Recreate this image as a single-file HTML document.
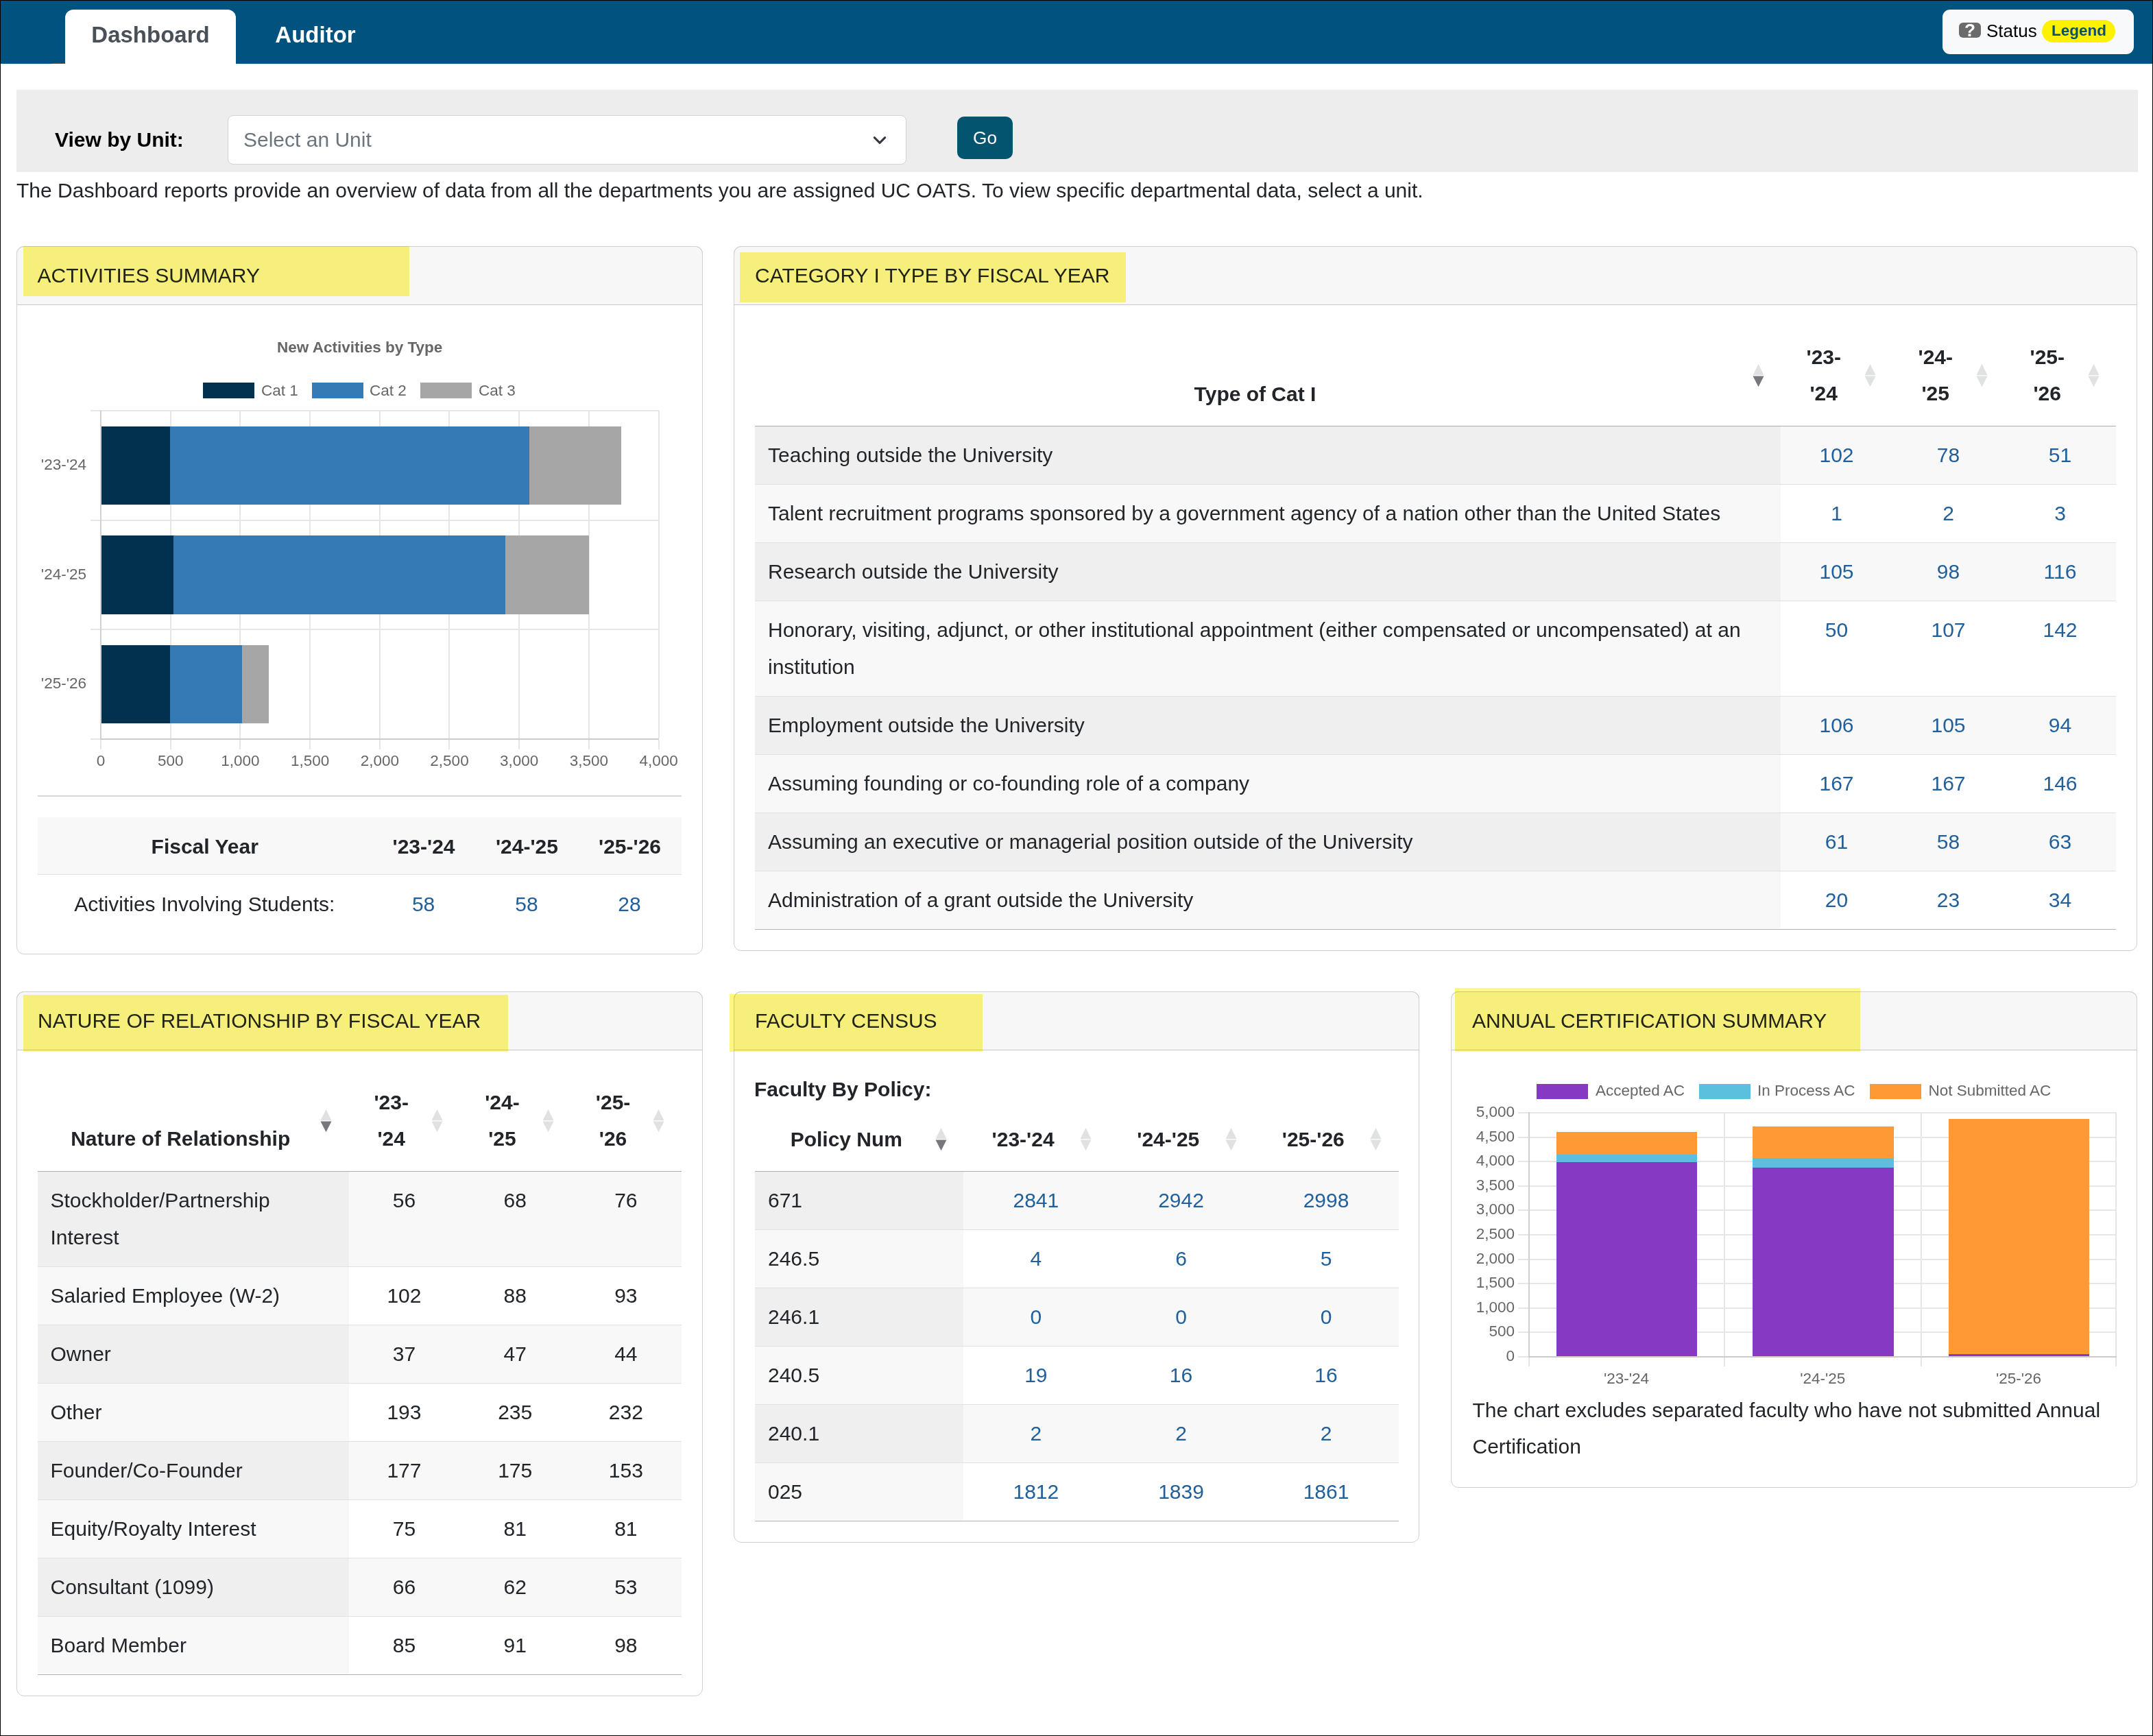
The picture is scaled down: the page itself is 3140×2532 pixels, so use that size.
<!DOCTYPE html>
<html><head><meta charset="utf-8"><title>Dashboard</title>
<style>
html,body{margin:0;padding:0;}
body{width:3140px;height:2532px;position:relative;overflow:hidden;background:#fff;font-family:"Liberation Sans", sans-serif;color:#212529;}
</style></head><body>
<div style="position:absolute;left:0px;top:0px;width:3140px;height:93px;background:#02527f;"></div><div style="position:absolute;left:95px;top:14px;width:249px;height:79px;background:#fff;border-radius:12px 12px 0 0;"></div><div style="position:absolute;left:76px;top:92px;width:19px;height:1px;background:#55534e;"></div><div style="position:absolute;left:-780.5px;width:2000px;text-align:center;top:34px;font-size:33px;line-height:33px;font-weight:bold;color:#495057;white-space:nowrap;">Dashboard</div><div style="position:absolute;left:-540px;width:2000px;text-align:center;top:34px;font-size:33px;line-height:33px;font-weight:bold;color:#fff;white-space:nowrap;">Auditor</div><div style="position:absolute;left:2833px;top:14px;width:279px;height:65px;background:#f8f9fa;border-radius:11px;"></div><div style="position:absolute;left:2857px;top:33px;width:32px;height:22px;background:#6b6b6b;border-radius:6px;"></div><div style="position:absolute;left:1873px;width:2000px;text-align:center;top:31px;font-size:26.25px;line-height:26.25px;font-weight:bold;color:#fff;white-space:nowrap;">?</div><div style="position:absolute;left:2897px;top:32px;font-size:26px;line-height:26px;color:#000;white-space:nowrap;">Status</div><div style="position:absolute;left:2978px;top:29px;width:107px;height:33px;background:#fff200;border-radius:17px;"></div><div style="position:absolute;left:2032px;width:2000px;text-align:center;top:34.3px;font-size:22.5px;line-height:22.5px;font-weight:bold;color:#0b4f6c;white-space:nowrap;">Legend</div><div style="position:absolute;left:24px;top:131px;width:3094px;height:120px;background:#ededed;"></div><div style="position:absolute;left:80px;top:189px;font-size:30px;line-height:30px;font-weight:bold;color:#000;white-space:nowrap;">View by Unit:</div><div style="position:absolute;left:332px;top:168px;width:990px;height:72px;background:#fff;border:1.5px solid #ced4da;border-radius:8px;box-sizing:border-box;"></div><div style="position:absolute;left:355px;top:189px;font-size:30px;line-height:30px;color:#6c757d;white-space:nowrap;">Select an Unit</div><svg style="position:absolute;left:1268px;top:194px" width="30" height="22"><polyline points="7.3,6.6 15,14.3 22.7,6.6" fill="none" stroke="#343a40" stroke-width="3.1" stroke-linecap="round" stroke-linejoin="round"/></svg><div style="position:absolute;left:1396px;top:170px;width:81px;height:62px;background:#03546e;border-radius:10px;"></div><div style="position:absolute;left:436.5px;width:2000px;text-align:center;top:188px;font-size:26.25px;line-height:26.25px;color:#fff;white-space:nowrap;">Go</div><div style="position:absolute;left:24px;top:263px;font-size:30px;line-height:30px;color:#212529;white-space:nowrap;">The Dashboard reports provide an overview of data from all the departments you are assigned UC OATS. To view specific departmental data, select a unit.</div><div style="position:absolute;left:24px;top:359px;width:1001px;height:1033px;border:1px solid #d0d0d0;border-radius:11px;box-sizing:border-box;background:#fff;overflow:hidden;"></div><div style="position:absolute;left:24px;top:359px;width:1001px;height:86px;background:#f7f7f7;border:1px solid #d0d0d0;border-bottom:1px solid #c8c8c8;border-radius:11px 11px 0 0;box-sizing:border-box;"></div><div style="position:absolute;left:1070px;top:359px;width:2047px;height:1028px;border:1px solid #d0d0d0;border-radius:11px;box-sizing:border-box;background:#fff;overflow:hidden;"></div><div style="position:absolute;left:1070px;top:359px;width:2047px;height:86px;background:#f7f7f7;border:1px solid #d0d0d0;border-bottom:1px solid #c8c8c8;border-radius:11px 11px 0 0;box-sizing:border-box;"></div><div style="position:absolute;left:24px;top:1446px;width:1001px;height:1028px;border:1px solid #d0d0d0;border-radius:11px;box-sizing:border-box;background:#fff;overflow:hidden;"></div><div style="position:absolute;left:24px;top:1446px;width:1001px;height:86px;background:#f7f7f7;border:1px solid #d0d0d0;border-bottom:1px solid #c8c8c8;border-radius:11px 11px 0 0;box-sizing:border-box;"></div><div style="position:absolute;left:1070px;top:1446px;width:1000px;height:804px;border:1px solid #d0d0d0;border-radius:11px;box-sizing:border-box;background:#fff;overflow:hidden;"></div><div style="position:absolute;left:1070px;top:1446px;width:1000px;height:86px;background:#f7f7f7;border:1px solid #d0d0d0;border-bottom:1px solid #c8c8c8;border-radius:11px 11px 0 0;box-sizing:border-box;"></div><div style="position:absolute;left:2116px;top:1446px;width:1001px;height:724px;border:1px solid #d0d0d0;border-radius:11px;box-sizing:border-box;background:#fff;overflow:hidden;"></div><div style="position:absolute;left:2116px;top:1446px;width:1001px;height:86px;background:#f7f7f7;border:1px solid #d0d0d0;border-bottom:1px solid #c8c8c8;border-radius:11px 11px 0 0;box-sizing:border-box;"></div><div style="position:absolute;left:54.5px;top:387px;font-size:30px;line-height:30px;color:#212529;white-space:nowrap;">ACTIVITIES SUMMARY</div><div style="position:absolute;left:1101px;top:387px;font-size:30px;line-height:30px;color:#212529;white-space:nowrap;">CATEGORY I TYPE BY FISCAL YEAR</div><div style="position:absolute;left:55px;top:1474px;font-size:30px;line-height:30px;color:#212529;white-space:nowrap;">NATURE OF RELATIONSHIP BY FISCAL YEAR</div><div style="position:absolute;left:1101px;top:1474px;font-size:30px;line-height:30px;color:#212529;white-space:nowrap;">FACULTY CENSUS</div><div style="position:absolute;left:2147px;top:1474px;font-size:30px;line-height:30px;color:#212529;white-space:nowrap;">ANNUAL CERTIFICATION SUMMARY</div><div style="position:absolute;left:-475.29999999999995px;width:2000px;text-align:center;top:496px;font-size:22.5px;line-height:22.5px;font-weight:bold;color:#666666;white-space:nowrap;">New Activities by Type</div><div style="position:absolute;left:296px;top:558px;width:75px;height:23px;background:#01314f;"></div><div style="position:absolute;left:381px;top:559px;font-size:22.5px;line-height:22.5px;color:#666666;white-space:nowrap;">Cat 1</div><div style="position:absolute;left:455px;top:558px;width:75px;height:23px;background:#3579b5;"></div><div style="position:absolute;left:539px;top:559px;font-size:22.5px;line-height:22.5px;color:#666666;white-space:nowrap;">Cat 2</div><div style="position:absolute;left:613px;top:558px;width:75px;height:23px;background:#a6a6a6;"></div><div style="position:absolute;left:698px;top:559px;font-size:22.5px;line-height:22.5px;color:#666666;white-space:nowrap;">Cat 3</div><div style="position:absolute;left:132px;top:598px;width:829px;height:2px;background:#e6e6e6;"></div><div style="position:absolute;left:132px;top:758px;width:829px;height:2px;background:#e6e6e6;"></div><div style="position:absolute;left:132px;top:917px;width:829px;height:2px;background:#e6e6e6;"></div><div style="position:absolute;left:132px;top:1077px;width:14px;height:2px;background:#e6e6e6;"></div><div style="position:absolute;left:146px;top:1077px;width:815px;height:2px;background:#cccccc;"></div><div style="position:absolute;left:146px;top:599px;width:2px;height:478px;background:#d2d2d2;"></div><div style="position:absolute;left:146px;top:1079px;width:2px;height:14px;background:#e6e6e6;"></div><div style="position:absolute;left:-853.0px;width:2000px;text-align:center;top:1099px;font-size:22.5px;line-height:22.5px;color:#666666;white-space:nowrap;">0</div><div style="position:absolute;left:248px;top:599px;width:2px;height:478px;background:#e6e6e6;"></div><div style="position:absolute;left:248px;top:1079px;width:2px;height:14px;background:#e6e6e6;"></div><div style="position:absolute;left:-751.3px;width:2000px;text-align:center;top:1099px;font-size:22.5px;line-height:22.5px;color:#666666;white-space:nowrap;">500</div><div style="position:absolute;left:349px;top:599px;width:2px;height:478px;background:#e6e6e6;"></div><div style="position:absolute;left:349px;top:1079px;width:2px;height:14px;background:#e6e6e6;"></div><div style="position:absolute;left:-649.6px;width:2000px;text-align:center;top:1099px;font-size:22.5px;line-height:22.5px;color:#666666;white-space:nowrap;">1,000</div><div style="position:absolute;left:451px;top:599px;width:2px;height:478px;background:#e6e6e6;"></div><div style="position:absolute;left:451px;top:1079px;width:2px;height:14px;background:#e6e6e6;"></div><div style="position:absolute;left:-547.9px;width:2000px;text-align:center;top:1099px;font-size:22.5px;line-height:22.5px;color:#666666;white-space:nowrap;">1,500</div><div style="position:absolute;left:553px;top:599px;width:2px;height:478px;background:#e6e6e6;"></div><div style="position:absolute;left:553px;top:1079px;width:2px;height:14px;background:#e6e6e6;"></div><div style="position:absolute;left:-446.20000000000005px;width:2000px;text-align:center;top:1099px;font-size:22.5px;line-height:22.5px;color:#666666;white-space:nowrap;">2,000</div><div style="position:absolute;left:654px;top:599px;width:2px;height:478px;background:#e6e6e6;"></div><div style="position:absolute;left:654px;top:1079px;width:2px;height:14px;background:#e6e6e6;"></div><div style="position:absolute;left:-344.5px;width:2000px;text-align:center;top:1099px;font-size:22.5px;line-height:22.5px;color:#666666;white-space:nowrap;">2,500</div><div style="position:absolute;left:756px;top:599px;width:2px;height:478px;background:#e6e6e6;"></div><div style="position:absolute;left:756px;top:1079px;width:2px;height:14px;background:#e6e6e6;"></div><div style="position:absolute;left:-242.79999999999995px;width:2000px;text-align:center;top:1099px;font-size:22.5px;line-height:22.5px;color:#666666;white-space:nowrap;">3,000</div><div style="position:absolute;left:858px;top:599px;width:2px;height:478px;background:#e6e6e6;"></div><div style="position:absolute;left:858px;top:1079px;width:2px;height:14px;background:#e6e6e6;"></div><div style="position:absolute;left:-141.10000000000002px;width:2000px;text-align:center;top:1099px;font-size:22.5px;line-height:22.5px;color:#666666;white-space:nowrap;">3,500</div><div style="position:absolute;left:960px;top:599px;width:2px;height:478px;background:#e6e6e6;"></div><div style="position:absolute;left:960px;top:1079px;width:2px;height:14px;background:#e6e6e6;"></div><div style="position:absolute;left:-39.39999999999998px;width:2000px;text-align:center;top:1099px;font-size:22.5px;line-height:22.5px;color:#666666;white-space:nowrap;">4,000</div><div style="position:absolute;left:148px;top:621.6px;width:100.30000000000001px;height:114.79999999999995px;background:#01314f;"></div><div style="position:absolute;left:248.3px;top:621.6px;width:523.5px;height:114.79999999999995px;background:#3579b5;"></div><div style="position:absolute;left:771.8px;top:621.6px;width:133.80000000000007px;height:114.79999999999995px;background:#a6a6a6;"></div><div style="position:absolute;left:148px;top:780.9px;width:105px;height:114.70000000000005px;background:#01314f;"></div><div style="position:absolute;left:253px;top:780.9px;width:484px;height:114.70000000000005px;background:#3579b5;"></div><div style="position:absolute;left:737px;top:780.9px;width:121.60000000000002px;height:114.70000000000005px;background:#a6a6a6;"></div><div style="position:absolute;left:148px;top:940.6px;width:100.30000000000001px;height:114.80000000000007px;background:#01314f;"></div><div style="position:absolute;left:248.3px;top:940.6px;width:105.0px;height:114.80000000000007px;background:#3579b5;"></div><div style="position:absolute;left:353.3px;top:940.6px;width:39.0px;height:114.80000000000007px;background:#a6a6a6;"></div><div style="position:absolute;left:-1874px;width:2000px;text-align:right;top:667px;font-size:22.5px;line-height:22.5px;color:#666666;white-space:nowrap;">'23-'24</div><div style="position:absolute;left:-1874px;width:2000px;text-align:right;top:826.5px;font-size:22.5px;line-height:22.5px;color:#666666;white-space:nowrap;">'24-'25</div><div style="position:absolute;left:-1874px;width:2000px;text-align:right;top:986px;font-size:22.5px;line-height:22.5px;color:#666666;white-space:nowrap;">'25-'26</div><div style="position:absolute;left:55px;top:1160px;width:939px;height:1.5px;background:#d8d8d8;"></div><div style="position:absolute;left:55px;top:1192px;width:939px;height:84px;background:#f8f8f8;border-bottom:1px solid #dee2e6;box-sizing:border-box;"></div><div style="position:absolute;left:-701.3px;width:2000px;text-align:center;top:1219.5px;font-size:30px;line-height:30px;font-weight:bold;color:#212529;white-space:nowrap;">Fiscal Year</div><div style="position:absolute;left:-382px;width:2000px;text-align:center;top:1219.5px;font-size:30px;line-height:30px;font-weight:bold;color:#212529;white-space:nowrap;">'23-'24</div><div style="position:absolute;left:-231.60000000000002px;width:2000px;text-align:center;top:1219.5px;font-size:30px;line-height:30px;font-weight:bold;color:#212529;white-space:nowrap;">'24-'25</div><div style="position:absolute;left:-81.5px;width:2000px;text-align:center;top:1219.5px;font-size:30px;line-height:30px;font-weight:bold;color:#212529;white-space:nowrap;">'25-'26</div><div style="position:absolute;left:-701.7px;width:2000px;text-align:center;top:1304px;font-size:30px;line-height:30px;color:#212529;white-space:nowrap;">Activities Involving Students:</div><div style="position:absolute;left:-382.4px;width:2000px;text-align:center;top:1304px;font-size:30px;line-height:30px;color:#22609c;white-space:nowrap;">58</div><div style="position:absolute;left:-232px;width:2000px;text-align:center;top:1304px;font-size:30px;line-height:30px;color:#22609c;white-space:nowrap;">58</div><div style="position:absolute;left:-82px;width:2000px;text-align:center;top:1304px;font-size:30px;line-height:30px;color:#22609c;white-space:nowrap;">28</div><div style="position:absolute;left:1101px;top:621px;width:1985px;height:1px;background:#adadad;"></div><div style="position:absolute;left:830.5px;width:2000px;text-align:center;top:560.4px;font-size:30px;line-height:30px;font-weight:bold;color:#212529;white-space:nowrap;">Type of Cat I</div><div style="position:absolute;left:1659.75px;width:2000px;text-align:center;top:505.5px;font-size:30px;line-height:30px;font-weight:bold;color:#212529;white-space:nowrap;">'23-</div><div style="position:absolute;left:1659.75px;width:2000px;text-align:center;top:559.4px;font-size:30px;line-height:30px;font-weight:bold;color:#212529;white-space:nowrap;">'24</div><div style="position:absolute;left:1822.75px;width:2000px;text-align:center;top:505.5px;font-size:30px;line-height:30px;font-weight:bold;color:#212529;white-space:nowrap;">'24-</div><div style="position:absolute;left:1822.75px;width:2000px;text-align:center;top:559.4px;font-size:30px;line-height:30px;font-weight:bold;color:#212529;white-space:nowrap;">'25</div><div style="position:absolute;left:1985.75px;width:2000px;text-align:center;top:505.5px;font-size:30px;line-height:30px;font-weight:bold;color:#212529;white-space:nowrap;">'25-</div><div style="position:absolute;left:1985.75px;width:2000px;text-align:center;top:559.4px;font-size:30px;line-height:30px;font-weight:bold;color:#212529;white-space:nowrap;">'26</div><svg style="position:absolute;left:2555.5px;top:530.6px" width="17" height="34" viewBox="0 0 17 34"><polygon points="8.5,0 16.5,16.2 0.5,16.2" fill="#e0e2e1"/><polygon points="0.5,17.4 16.5,17.4 8.5,33.2" fill="#76787c"/></svg><svg style="position:absolute;left:2718.5px;top:530.6px" width="17" height="34" viewBox="0 0 17 34"><polygon points="8.5,0 16.5,16.2 0.5,16.2" fill="#e0e2e1"/><polygon points="0.5,17.4 16.5,17.4 8.5,33.2" fill="#e0e2e1"/></svg><svg style="position:absolute;left:2881.5px;top:530.6px" width="17" height="34" viewBox="0 0 17 34"><polygon points="8.5,0 16.5,16.2 0.5,16.2" fill="#e0e2e1"/><polygon points="0.5,17.4 16.5,17.4 8.5,33.2" fill="#e0e2e1"/></svg><svg style="position:absolute;left:3044.5px;top:530.6px" width="17" height="34" viewBox="0 0 17 34"><polygon points="8.5,0 16.5,16.2 0.5,16.2" fill="#e0e2e1"/><polygon points="0.5,17.4 16.5,17.4 8.5,33.2" fill="#e0e2e1"/></svg><div style="position:absolute;left:1101px;top:622px;width:1496px;height:84px;background:#efefef;"></div><div style="position:absolute;left:2597px;top:622px;width:489px;height:84px;background:#f8f8f8;"></div><div style="position:absolute;left:1101px;top:706px;width:1985px;height:1px;background:#dee2e6;"></div><div style="position:absolute;left:1120px;top:648.7px;font-size:30px;line-height:30px;color:#212529;white-space:nowrap;">Teaching outside the University</div><div style="position:absolute;left:1678.5px;width:2000px;text-align:center;top:648.7px;font-size:30px;line-height:30px;color:#22609c;white-space:nowrap;">102</div><div style="position:absolute;left:1841.5px;width:2000px;text-align:center;top:648.7px;font-size:30px;line-height:30px;color:#22609c;white-space:nowrap;">78</div><div style="position:absolute;left:2004.5px;width:2000px;text-align:center;top:648.7px;font-size:30px;line-height:30px;color:#22609c;white-space:nowrap;">51</div><div style="position:absolute;left:1101px;top:707px;width:1496px;height:84px;background:#f8f8f8;"></div><div style="position:absolute;left:2597px;top:707px;width:489px;height:84px;background:#ffffff;"></div><div style="position:absolute;left:1101px;top:791px;width:1985px;height:1px;background:#dee2e6;"></div><div style="position:absolute;left:1120px;top:733.7px;font-size:30px;line-height:30px;color:#212529;white-space:nowrap;">Talent recruitment programs sponsored by a government agency of a nation other than the United States</div><div style="position:absolute;left:1678.5px;width:2000px;text-align:center;top:733.7px;font-size:30px;line-height:30px;color:#22609c;white-space:nowrap;">1</div><div style="position:absolute;left:1841.5px;width:2000px;text-align:center;top:733.7px;font-size:30px;line-height:30px;color:#22609c;white-space:nowrap;">2</div><div style="position:absolute;left:2004.5px;width:2000px;text-align:center;top:733.7px;font-size:30px;line-height:30px;color:#22609c;white-space:nowrap;">3</div><div style="position:absolute;left:1101px;top:792px;width:1496px;height:84px;background:#efefef;"></div><div style="position:absolute;left:2597px;top:792px;width:489px;height:84px;background:#f8f8f8;"></div><div style="position:absolute;left:1101px;top:876px;width:1985px;height:1px;background:#dee2e6;"></div><div style="position:absolute;left:1120px;top:818.7px;font-size:30px;line-height:30px;color:#212529;white-space:nowrap;">Research outside the University</div><div style="position:absolute;left:1678.5px;width:2000px;text-align:center;top:818.7px;font-size:30px;line-height:30px;color:#22609c;white-space:nowrap;">105</div><div style="position:absolute;left:1841.5px;width:2000px;text-align:center;top:818.7px;font-size:30px;line-height:30px;color:#22609c;white-space:nowrap;">98</div><div style="position:absolute;left:2004.5px;width:2000px;text-align:center;top:818.7px;font-size:30px;line-height:30px;color:#22609c;white-space:nowrap;">116</div><div style="position:absolute;left:1101px;top:877px;width:1496px;height:138px;background:#f8f8f8;"></div><div style="position:absolute;left:2597px;top:877px;width:489px;height:138px;background:#ffffff;"></div><div style="position:absolute;left:1101px;top:1015px;width:1985px;height:1px;background:#dee2e6;"></div><div style="position:absolute;left:1120px;top:891.7px;font-size:30px;line-height:54px;color:#212529;white-space:nowrap;">Honorary, visiting, adjunct, or other institutional appointment (either compensated or uncompensated) at an<br>institution</div><div style="position:absolute;left:1678.5px;width:2000px;text-align:center;top:903.7px;font-size:30px;line-height:30px;color:#22609c;white-space:nowrap;">50</div><div style="position:absolute;left:1841.5px;width:2000px;text-align:center;top:903.7px;font-size:30px;line-height:30px;color:#22609c;white-space:nowrap;">107</div><div style="position:absolute;left:2004.5px;width:2000px;text-align:center;top:903.7px;font-size:30px;line-height:30px;color:#22609c;white-space:nowrap;">142</div><div style="position:absolute;left:1101px;top:1016px;width:1496px;height:84px;background:#efefef;"></div><div style="position:absolute;left:2597px;top:1016px;width:489px;height:84px;background:#f8f8f8;"></div><div style="position:absolute;left:1101px;top:1100px;width:1985px;height:1px;background:#dee2e6;"></div><div style="position:absolute;left:1120px;top:1042.7px;font-size:30px;line-height:30px;color:#212529;white-space:nowrap;">Employment outside the University</div><div style="position:absolute;left:1678.5px;width:2000px;text-align:center;top:1042.7px;font-size:30px;line-height:30px;color:#22609c;white-space:nowrap;">106</div><div style="position:absolute;left:1841.5px;width:2000px;text-align:center;top:1042.7px;font-size:30px;line-height:30px;color:#22609c;white-space:nowrap;">105</div><div style="position:absolute;left:2004.5px;width:2000px;text-align:center;top:1042.7px;font-size:30px;line-height:30px;color:#22609c;white-space:nowrap;">94</div><div style="position:absolute;left:1101px;top:1101px;width:1496px;height:84px;background:#f8f8f8;"></div><div style="position:absolute;left:2597px;top:1101px;width:489px;height:84px;background:#ffffff;"></div><div style="position:absolute;left:1101px;top:1185px;width:1985px;height:1px;background:#dee2e6;"></div><div style="position:absolute;left:1120px;top:1127.7px;font-size:30px;line-height:30px;color:#212529;white-space:nowrap;">Assuming founding or co-founding role of a company</div><div style="position:absolute;left:1678.5px;width:2000px;text-align:center;top:1127.7px;font-size:30px;line-height:30px;color:#22609c;white-space:nowrap;">167</div><div style="position:absolute;left:1841.5px;width:2000px;text-align:center;top:1127.7px;font-size:30px;line-height:30px;color:#22609c;white-space:nowrap;">167</div><div style="position:absolute;left:2004.5px;width:2000px;text-align:center;top:1127.7px;font-size:30px;line-height:30px;color:#22609c;white-space:nowrap;">146</div><div style="position:absolute;left:1101px;top:1186px;width:1496px;height:84px;background:#efefef;"></div><div style="position:absolute;left:2597px;top:1186px;width:489px;height:84px;background:#f8f8f8;"></div><div style="position:absolute;left:1101px;top:1270px;width:1985px;height:1px;background:#dee2e6;"></div><div style="position:absolute;left:1120px;top:1212.7px;font-size:30px;line-height:30px;color:#212529;white-space:nowrap;">Assuming an executive or managerial position outside of the University</div><div style="position:absolute;left:1678.5px;width:2000px;text-align:center;top:1212.7px;font-size:30px;line-height:30px;color:#22609c;white-space:nowrap;">61</div><div style="position:absolute;left:1841.5px;width:2000px;text-align:center;top:1212.7px;font-size:30px;line-height:30px;color:#22609c;white-space:nowrap;">58</div><div style="position:absolute;left:2004.5px;width:2000px;text-align:center;top:1212.7px;font-size:30px;line-height:30px;color:#22609c;white-space:nowrap;">63</div><div style="position:absolute;left:1101px;top:1271px;width:1496px;height:83px;background:#f8f8f8;"></div><div style="position:absolute;left:2597px;top:1271px;width:489px;height:83px;background:#ffffff;"></div><div style="position:absolute;left:1120px;top:1297.7px;font-size:30px;line-height:30px;color:#212529;white-space:nowrap;">Administration of a grant outside the University</div><div style="position:absolute;left:1678.5px;width:2000px;text-align:center;top:1297.7px;font-size:30px;line-height:30px;color:#22609c;white-space:nowrap;">20</div><div style="position:absolute;left:1841.5px;width:2000px;text-align:center;top:1297.7px;font-size:30px;line-height:30px;color:#22609c;white-space:nowrap;">23</div><div style="position:absolute;left:2004.5px;width:2000px;text-align:center;top:1297.7px;font-size:30px;line-height:30px;color:#22609c;white-space:nowrap;">34</div><div style="position:absolute;left:1101px;top:1355px;width:1985px;height:1px;background:#b0b0b0;"></div><div style="position:absolute;left:55.3px;top:1708px;width:938.3000000000001px;height:1px;background:#adadad;"></div><div style="position:absolute;left:-736.8px;width:2000px;text-align:center;top:1646.3px;font-size:30px;line-height:30px;font-weight:bold;color:#212529;white-space:nowrap;">Nature of Relationship</div><div style="position:absolute;left:-429.29999999999995px;width:2000px;text-align:center;top:1592.6px;font-size:30px;line-height:30px;font-weight:bold;color:#212529;white-space:nowrap;">'23-</div><div style="position:absolute;left:-429.29999999999995px;width:2000px;text-align:center;top:1646.3px;font-size:30px;line-height:30px;font-weight:bold;color:#212529;white-space:nowrap;">'24</div><div style="position:absolute;left:-267.6px;width:2000px;text-align:center;top:1592.6px;font-size:30px;line-height:30px;font-weight:bold;color:#212529;white-space:nowrap;">'24-</div><div style="position:absolute;left:-267.6px;width:2000px;text-align:center;top:1646.3px;font-size:30px;line-height:30px;font-weight:bold;color:#212529;white-space:nowrap;">'25</div><div style="position:absolute;left:-105.95000000000005px;width:2000px;text-align:center;top:1592.6px;font-size:30px;line-height:30px;font-weight:bold;color:#212529;white-space:nowrap;">'25-</div><div style="position:absolute;left:-105.95000000000005px;width:2000px;text-align:center;top:1646.3px;font-size:30px;line-height:30px;font-weight:bold;color:#212529;white-space:nowrap;">'26</div><svg style="position:absolute;left:467.1px;top:1617.6px" width="17" height="34" viewBox="0 0 17 34"><polygon points="8.5,0 16.5,16.2 0.5,16.2" fill="#e0e2e1"/><polygon points="0.5,17.4 16.5,17.4 8.5,33.2" fill="#76787c"/></svg><svg style="position:absolute;left:628.8px;top:1617.6px" width="17" height="34" viewBox="0 0 17 34"><polygon points="8.5,0 16.5,16.2 0.5,16.2" fill="#e0e2e1"/><polygon points="0.5,17.4 16.5,17.4 8.5,33.2" fill="#e0e2e1"/></svg><svg style="position:absolute;left:790.5px;top:1617.6px" width="17" height="34" viewBox="0 0 17 34"><polygon points="8.5,0 16.5,16.2 0.5,16.2" fill="#e0e2e1"/><polygon points="0.5,17.4 16.5,17.4 8.5,33.2" fill="#e0e2e1"/></svg><svg style="position:absolute;left:952.1px;top:1617.6px" width="17" height="34" viewBox="0 0 17 34"><polygon points="8.5,0 16.5,16.2 0.5,16.2" fill="#e0e2e1"/><polygon points="0.5,17.4 16.5,17.4 8.5,33.2" fill="#e0e2e1"/></svg><div style="position:absolute;left:55.3px;top:1709px;width:453.3px;height:138px;background:#efefef;"></div><div style="position:absolute;left:508.6px;top:1709px;width:485.0px;height:138px;background:#f8f8f8;"></div><div style="position:absolute;left:55.3px;top:1847px;width:938.3000000000001px;height:1px;background:#dee2e6;"></div><div style="position:absolute;left:73.5px;top:1723.7px;font-size:30px;line-height:54px;color:#212529;white-space:nowrap;">Stockholder/Partnership<br>Interest</div><div style="position:absolute;left:-410.54999999999995px;width:2000px;text-align:center;top:1735.7px;font-size:30px;line-height:30px;color:#212529;white-space:nowrap;">56</div><div style="position:absolute;left:-248.85000000000002px;width:2000px;text-align:center;top:1735.7px;font-size:30px;line-height:30px;color:#212529;white-space:nowrap;">68</div><div style="position:absolute;left:-87.20000000000005px;width:2000px;text-align:center;top:1735.7px;font-size:30px;line-height:30px;color:#212529;white-space:nowrap;">76</div><div style="position:absolute;left:55.3px;top:1848px;width:453.3px;height:84px;background:#f8f8f8;"></div><div style="position:absolute;left:508.6px;top:1848px;width:485.0px;height:84px;background:#ffffff;"></div><div style="position:absolute;left:55.3px;top:1932px;width:938.3000000000001px;height:1px;background:#dee2e6;"></div><div style="position:absolute;left:73.5px;top:1874.7px;font-size:30px;line-height:30px;color:#212529;white-space:nowrap;">Salaried Employee (W-2)</div><div style="position:absolute;left:-410.54999999999995px;width:2000px;text-align:center;top:1874.7px;font-size:30px;line-height:30px;color:#212529;white-space:nowrap;">102</div><div style="position:absolute;left:-248.85000000000002px;width:2000px;text-align:center;top:1874.7px;font-size:30px;line-height:30px;color:#212529;white-space:nowrap;">88</div><div style="position:absolute;left:-87.20000000000005px;width:2000px;text-align:center;top:1874.7px;font-size:30px;line-height:30px;color:#212529;white-space:nowrap;">93</div><div style="position:absolute;left:55.3px;top:1933px;width:453.3px;height:84px;background:#efefef;"></div><div style="position:absolute;left:508.6px;top:1933px;width:485.0px;height:84px;background:#f8f8f8;"></div><div style="position:absolute;left:55.3px;top:2017px;width:938.3000000000001px;height:1px;background:#dee2e6;"></div><div style="position:absolute;left:73.5px;top:1959.7px;font-size:30px;line-height:30px;color:#212529;white-space:nowrap;">Owner</div><div style="position:absolute;left:-410.54999999999995px;width:2000px;text-align:center;top:1959.7px;font-size:30px;line-height:30px;color:#212529;white-space:nowrap;">37</div><div style="position:absolute;left:-248.85000000000002px;width:2000px;text-align:center;top:1959.7px;font-size:30px;line-height:30px;color:#212529;white-space:nowrap;">47</div><div style="position:absolute;left:-87.20000000000005px;width:2000px;text-align:center;top:1959.7px;font-size:30px;line-height:30px;color:#212529;white-space:nowrap;">44</div><div style="position:absolute;left:55.3px;top:2018px;width:453.3px;height:84px;background:#f8f8f8;"></div><div style="position:absolute;left:508.6px;top:2018px;width:485.0px;height:84px;background:#ffffff;"></div><div style="position:absolute;left:55.3px;top:2102px;width:938.3000000000001px;height:1px;background:#dee2e6;"></div><div style="position:absolute;left:73.5px;top:2044.6999999999998px;font-size:30px;line-height:30px;color:#212529;white-space:nowrap;">Other</div><div style="position:absolute;left:-410.54999999999995px;width:2000px;text-align:center;top:2044.6999999999998px;font-size:30px;line-height:30px;color:#212529;white-space:nowrap;">193</div><div style="position:absolute;left:-248.85000000000002px;width:2000px;text-align:center;top:2044.6999999999998px;font-size:30px;line-height:30px;color:#212529;white-space:nowrap;">235</div><div style="position:absolute;left:-87.20000000000005px;width:2000px;text-align:center;top:2044.6999999999998px;font-size:30px;line-height:30px;color:#212529;white-space:nowrap;">232</div><div style="position:absolute;left:55.3px;top:2103px;width:453.3px;height:84px;background:#efefef;"></div><div style="position:absolute;left:508.6px;top:2103px;width:485.0px;height:84px;background:#f8f8f8;"></div><div style="position:absolute;left:55.3px;top:2187px;width:938.3000000000001px;height:1px;background:#dee2e6;"></div><div style="position:absolute;left:73.5px;top:2129.7px;font-size:30px;line-height:30px;color:#212529;white-space:nowrap;">Founder/Co-Founder</div><div style="position:absolute;left:-410.54999999999995px;width:2000px;text-align:center;top:2129.7px;font-size:30px;line-height:30px;color:#212529;white-space:nowrap;">177</div><div style="position:absolute;left:-248.85000000000002px;width:2000px;text-align:center;top:2129.7px;font-size:30px;line-height:30px;color:#212529;white-space:nowrap;">175</div><div style="position:absolute;left:-87.20000000000005px;width:2000px;text-align:center;top:2129.7px;font-size:30px;line-height:30px;color:#212529;white-space:nowrap;">153</div><div style="position:absolute;left:55.3px;top:2188px;width:453.3px;height:84px;background:#f8f8f8;"></div><div style="position:absolute;left:508.6px;top:2188px;width:485.0px;height:84px;background:#ffffff;"></div><div style="position:absolute;left:55.3px;top:2272px;width:938.3000000000001px;height:1px;background:#dee2e6;"></div><div style="position:absolute;left:73.5px;top:2214.7px;font-size:30px;line-height:30px;color:#212529;white-space:nowrap;">Equity/Royalty Interest</div><div style="position:absolute;left:-410.54999999999995px;width:2000px;text-align:center;top:2214.7px;font-size:30px;line-height:30px;color:#212529;white-space:nowrap;">75</div><div style="position:absolute;left:-248.85000000000002px;width:2000px;text-align:center;top:2214.7px;font-size:30px;line-height:30px;color:#212529;white-space:nowrap;">81</div><div style="position:absolute;left:-87.20000000000005px;width:2000px;text-align:center;top:2214.7px;font-size:30px;line-height:30px;color:#212529;white-space:nowrap;">81</div><div style="position:absolute;left:55.3px;top:2273px;width:453.3px;height:84px;background:#efefef;"></div><div style="position:absolute;left:508.6px;top:2273px;width:485.0px;height:84px;background:#f8f8f8;"></div><div style="position:absolute;left:55.3px;top:2357px;width:938.3000000000001px;height:1px;background:#dee2e6;"></div><div style="position:absolute;left:73.5px;top:2299.7px;font-size:30px;line-height:30px;color:#212529;white-space:nowrap;">Consultant (1099)</div><div style="position:absolute;left:-410.54999999999995px;width:2000px;text-align:center;top:2299.7px;font-size:30px;line-height:30px;color:#212529;white-space:nowrap;">66</div><div style="position:absolute;left:-248.85000000000002px;width:2000px;text-align:center;top:2299.7px;font-size:30px;line-height:30px;color:#212529;white-space:nowrap;">62</div><div style="position:absolute;left:-87.20000000000005px;width:2000px;text-align:center;top:2299.7px;font-size:30px;line-height:30px;color:#212529;white-space:nowrap;">53</div><div style="position:absolute;left:55.3px;top:2358px;width:453.3px;height:83px;background:#f8f8f8;"></div><div style="position:absolute;left:508.6px;top:2358px;width:485.0px;height:83px;background:#ffffff;"></div><div style="position:absolute;left:73.5px;top:2384.7px;font-size:30px;line-height:30px;color:#212529;white-space:nowrap;">Board Member</div><div style="position:absolute;left:-410.54999999999995px;width:2000px;text-align:center;top:2384.7px;font-size:30px;line-height:30px;color:#212529;white-space:nowrap;">85</div><div style="position:absolute;left:-248.85000000000002px;width:2000px;text-align:center;top:2384.7px;font-size:30px;line-height:30px;color:#212529;white-space:nowrap;">91</div><div style="position:absolute;left:-87.20000000000005px;width:2000px;text-align:center;top:2384.7px;font-size:30px;line-height:30px;color:#212529;white-space:nowrap;">98</div><div style="position:absolute;left:55.3px;top:2442px;width:938.3000000000001px;height:1px;background:#b0b0b0;"></div><div style="position:absolute;left:1100px;top:1573.7px;font-size:30px;line-height:30px;font-weight:bold;color:#212529;white-space:nowrap;">Faculty By Policy:</div><div style="position:absolute;left:1101.2px;top:1708px;width:938.5999999999999px;height:1px;background:#adadad;"></div><div style="position:absolute;left:234.3499999999999px;width:2000px;text-align:center;top:1647.2px;font-size:30px;line-height:30px;font-weight:bold;color:#212529;white-space:nowrap;">Policy Num</div><svg style="position:absolute;left:1363.5px;top:1644.7px" width="17" height="34" viewBox="0 0 17 34"><polygon points="8.5,0 16.5,16.2 0.5,16.2" fill="#e0e2e1"/><polygon points="0.5,17.4 16.5,17.4 8.5,33.2" fill="#76787c"/></svg><div style="position:absolute;left:492.0999999999999px;width:2000px;text-align:center;top:1647.2px;font-size:30px;line-height:30px;font-weight:bold;color:#212529;white-space:nowrap;">'23-'24</div><svg style="position:absolute;left:1575.2px;top:1644.7px" width="17" height="34" viewBox="0 0 17 34"><polygon points="8.5,0 16.5,16.2 0.5,16.2" fill="#e0e2e1"/><polygon points="0.5,17.4 16.5,17.4 8.5,33.2" fill="#e0e2e1"/></svg><div style="position:absolute;left:703.75px;width:2000px;text-align:center;top:1647.2px;font-size:30px;line-height:30px;font-weight:bold;color:#212529;white-space:nowrap;">'24-'25</div><svg style="position:absolute;left:1786.8px;top:1644.7px" width="17" height="34" viewBox="0 0 17 34"><polygon points="8.5,0 16.5,16.2 0.5,16.2" fill="#e0e2e1"/><polygon points="0.5,17.4 16.5,17.4 8.5,33.2" fill="#e0e2e1"/></svg><div style="position:absolute;left:915.3px;width:2000px;text-align:center;top:1647.2px;font-size:30px;line-height:30px;font-weight:bold;color:#212529;white-space:nowrap;">'25-'26</div><svg style="position:absolute;left:1998.3px;top:1644.7px" width="17" height="34" viewBox="0 0 17 34"><polygon points="8.5,0 16.5,16.2 0.5,16.2" fill="#e0e2e1"/><polygon points="0.5,17.4 16.5,17.4 8.5,33.2" fill="#e0e2e1"/></svg><div style="position:absolute;left:1101.2px;top:1709px;width:303.79999999999995px;height:84px;background:#efefef;"></div><div style="position:absolute;left:1405px;top:1709px;width:634.8px;height:84px;background:#f8f8f8;"></div><div style="position:absolute;left:1101.2px;top:1793px;width:938.5999999999999px;height:1px;background:#dee2e6;"></div><div style="position:absolute;left:1120px;top:1735.7px;font-size:30px;line-height:30px;color:#212529;white-space:nowrap;">671</div><div style="position:absolute;left:510.8499999999999px;width:2000px;text-align:center;top:1735.7px;font-size:30px;line-height:30px;color:#22609c;white-space:nowrap;">2841</div><div style="position:absolute;left:722.5px;width:2000px;text-align:center;top:1735.7px;font-size:30px;line-height:30px;color:#22609c;white-space:nowrap;">2942</div><div style="position:absolute;left:934.05px;width:2000px;text-align:center;top:1735.7px;font-size:30px;line-height:30px;color:#22609c;white-space:nowrap;">2998</div><div style="position:absolute;left:1101.2px;top:1794px;width:303.79999999999995px;height:84px;background:#f8f8f8;"></div><div style="position:absolute;left:1405px;top:1794px;width:634.8px;height:84px;background:#ffffff;"></div><div style="position:absolute;left:1101.2px;top:1878px;width:938.5999999999999px;height:1px;background:#dee2e6;"></div><div style="position:absolute;left:1120px;top:1820.7px;font-size:30px;line-height:30px;color:#212529;white-space:nowrap;">246.5</div><div style="position:absolute;left:510.8499999999999px;width:2000px;text-align:center;top:1820.7px;font-size:30px;line-height:30px;color:#22609c;white-space:nowrap;">4</div><div style="position:absolute;left:722.5px;width:2000px;text-align:center;top:1820.7px;font-size:30px;line-height:30px;color:#22609c;white-space:nowrap;">6</div><div style="position:absolute;left:934.05px;width:2000px;text-align:center;top:1820.7px;font-size:30px;line-height:30px;color:#22609c;white-space:nowrap;">5</div><div style="position:absolute;left:1101.2px;top:1879px;width:303.79999999999995px;height:84px;background:#efefef;"></div><div style="position:absolute;left:1405px;top:1879px;width:634.8px;height:84px;background:#f8f8f8;"></div><div style="position:absolute;left:1101.2px;top:1963px;width:938.5999999999999px;height:1px;background:#dee2e6;"></div><div style="position:absolute;left:1120px;top:1905.7px;font-size:30px;line-height:30px;color:#212529;white-space:nowrap;">246.1</div><div style="position:absolute;left:510.8499999999999px;width:2000px;text-align:center;top:1905.7px;font-size:30px;line-height:30px;color:#22609c;white-space:nowrap;">0</div><div style="position:absolute;left:722.5px;width:2000px;text-align:center;top:1905.7px;font-size:30px;line-height:30px;color:#22609c;white-space:nowrap;">0</div><div style="position:absolute;left:934.05px;width:2000px;text-align:center;top:1905.7px;font-size:30px;line-height:30px;color:#22609c;white-space:nowrap;">0</div><div style="position:absolute;left:1101.2px;top:1964px;width:303.79999999999995px;height:84px;background:#f8f8f8;"></div><div style="position:absolute;left:1405px;top:1964px;width:634.8px;height:84px;background:#ffffff;"></div><div style="position:absolute;left:1101.2px;top:2048px;width:938.5999999999999px;height:1px;background:#dee2e6;"></div><div style="position:absolute;left:1120px;top:1990.7px;font-size:30px;line-height:30px;color:#212529;white-space:nowrap;">240.5</div><div style="position:absolute;left:510.8499999999999px;width:2000px;text-align:center;top:1990.7px;font-size:30px;line-height:30px;color:#22609c;white-space:nowrap;">19</div><div style="position:absolute;left:722.5px;width:2000px;text-align:center;top:1990.7px;font-size:30px;line-height:30px;color:#22609c;white-space:nowrap;">16</div><div style="position:absolute;left:934.05px;width:2000px;text-align:center;top:1990.7px;font-size:30px;line-height:30px;color:#22609c;white-space:nowrap;">16</div><div style="position:absolute;left:1101.2px;top:2049px;width:303.79999999999995px;height:84px;background:#efefef;"></div><div style="position:absolute;left:1405px;top:2049px;width:634.8px;height:84px;background:#f8f8f8;"></div><div style="position:absolute;left:1101.2px;top:2133px;width:938.5999999999999px;height:1px;background:#dee2e6;"></div><div style="position:absolute;left:1120px;top:2075.7px;font-size:30px;line-height:30px;color:#212529;white-space:nowrap;">240.1</div><div style="position:absolute;left:510.8499999999999px;width:2000px;text-align:center;top:2075.7px;font-size:30px;line-height:30px;color:#22609c;white-space:nowrap;">2</div><div style="position:absolute;left:722.5px;width:2000px;text-align:center;top:2075.7px;font-size:30px;line-height:30px;color:#22609c;white-space:nowrap;">2</div><div style="position:absolute;left:934.05px;width:2000px;text-align:center;top:2075.7px;font-size:30px;line-height:30px;color:#22609c;white-space:nowrap;">2</div><div style="position:absolute;left:1101.2px;top:2134px;width:303.79999999999995px;height:83px;background:#f8f8f8;"></div><div style="position:absolute;left:1405px;top:2134px;width:634.8px;height:83px;background:#ffffff;"></div><div style="position:absolute;left:1120px;top:2160.7px;font-size:30px;line-height:30px;color:#212529;white-space:nowrap;">025</div><div style="position:absolute;left:510.8499999999999px;width:2000px;text-align:center;top:2160.7px;font-size:30px;line-height:30px;color:#22609c;white-space:nowrap;">1812</div><div style="position:absolute;left:722.5px;width:2000px;text-align:center;top:2160.7px;font-size:30px;line-height:30px;color:#22609c;white-space:nowrap;">1839</div><div style="position:absolute;left:934.05px;width:2000px;text-align:center;top:2160.7px;font-size:30px;line-height:30px;color:#22609c;white-space:nowrap;">1861</div><div style="position:absolute;left:1101.2px;top:2218px;width:938.5999999999999px;height:1px;background:#b0b0b0;"></div><div style="position:absolute;left:2214px;top:1978px;width:15px;height:2px;background:#e6e6e6;"></div><div style="position:absolute;left:2229px;top:1978px;width:858px;height:2px;background:#cccccc;"></div><div style="position:absolute;left:209px;width:2000px;text-align:right;top:1966.5px;font-size:22.5px;line-height:22.5px;color:#666666;white-space:nowrap;">0</div><div style="position:absolute;left:2214px;top:1942px;width:15px;height:2px;background:#e6e6e6;"></div><div style="position:absolute;left:2229px;top:1942px;width:858px;height:2px;background:#e6e6e6;"></div><div style="position:absolute;left:209px;width:2000px;text-align:right;top:1930.5px;font-size:22.5px;line-height:22.5px;color:#666666;white-space:nowrap;">500</div><div style="position:absolute;left:2214px;top:1907px;width:15px;height:2px;background:#e6e6e6;"></div><div style="position:absolute;left:2229px;top:1907px;width:858px;height:2px;background:#e6e6e6;"></div><div style="position:absolute;left:209px;width:2000px;text-align:right;top:1895.5px;font-size:22.5px;line-height:22.5px;color:#666666;white-space:nowrap;">1,000</div><div style="position:absolute;left:2214px;top:1871px;width:15px;height:2px;background:#e6e6e6;"></div><div style="position:absolute;left:2229px;top:1871px;width:858px;height:2px;background:#e6e6e6;"></div><div style="position:absolute;left:209px;width:2000px;text-align:right;top:1859.5px;font-size:22.5px;line-height:22.5px;color:#666666;white-space:nowrap;">1,500</div><div style="position:absolute;left:2214px;top:1836px;width:15px;height:2px;background:#e6e6e6;"></div><div style="position:absolute;left:2229px;top:1836px;width:858px;height:2px;background:#e6e6e6;"></div><div style="position:absolute;left:209px;width:2000px;text-align:right;top:1824.5px;font-size:22.5px;line-height:22.5px;color:#666666;white-space:nowrap;">2,000</div><div style="position:absolute;left:2214px;top:1800px;width:15px;height:2px;background:#e6e6e6;"></div><div style="position:absolute;left:2229px;top:1800px;width:858px;height:2px;background:#e6e6e6;"></div><div style="position:absolute;left:209px;width:2000px;text-align:right;top:1788.5px;font-size:22.5px;line-height:22.5px;color:#666666;white-space:nowrap;">2,500</div><div style="position:absolute;left:2214px;top:1764px;width:15px;height:2px;background:#e6e6e6;"></div><div style="position:absolute;left:2229px;top:1764px;width:858px;height:2px;background:#e6e6e6;"></div><div style="position:absolute;left:209px;width:2000px;text-align:right;top:1752.5px;font-size:22.5px;line-height:22.5px;color:#666666;white-space:nowrap;">3,000</div><div style="position:absolute;left:2214px;top:1729px;width:15px;height:2px;background:#e6e6e6;"></div><div style="position:absolute;left:2229px;top:1729px;width:858px;height:2px;background:#e6e6e6;"></div><div style="position:absolute;left:209px;width:2000px;text-align:right;top:1717.5px;font-size:22.5px;line-height:22.5px;color:#666666;white-space:nowrap;">3,500</div><div style="position:absolute;left:2214px;top:1693px;width:15px;height:2px;background:#e6e6e6;"></div><div style="position:absolute;left:2229px;top:1693px;width:858px;height:2px;background:#e6e6e6;"></div><div style="position:absolute;left:209px;width:2000px;text-align:right;top:1681.5px;font-size:22.5px;line-height:22.5px;color:#666666;white-space:nowrap;">4,000</div><div style="position:absolute;left:2214px;top:1658px;width:15px;height:2px;background:#e6e6e6;"></div><div style="position:absolute;left:2229px;top:1658px;width:858px;height:2px;background:#e6e6e6;"></div><div style="position:absolute;left:209px;width:2000px;text-align:right;top:1646.5px;font-size:22.5px;line-height:22.5px;color:#666666;white-space:nowrap;">4,500</div><div style="position:absolute;left:2214px;top:1622px;width:15px;height:2px;background:#e6e6e6;"></div><div style="position:absolute;left:2229px;top:1622px;width:858px;height:2px;background:#e6e6e6;"></div><div style="position:absolute;left:209px;width:2000px;text-align:right;top:1610.5px;font-size:22.5px;line-height:22.5px;color:#666666;white-space:nowrap;">5,000</div><div style="position:absolute;left:2229px;top:1622px;width:2px;height:356px;background:#d0d0d0;"></div><div style="position:absolute;left:2229px;top:1980px;width:2px;height:13px;background:#e6e6e6;"></div><div style="position:absolute;left:2514px;top:1622px;width:2px;height:356px;background:#e6e6e6;"></div><div style="position:absolute;left:2514px;top:1980px;width:2px;height:13px;background:#e6e6e6;"></div><div style="position:absolute;left:2801px;top:1622px;width:2px;height:356px;background:#e6e6e6;"></div><div style="position:absolute;left:2801px;top:1980px;width:2px;height:13px;background:#e6e6e6;"></div><div style="position:absolute;left:3085px;top:1622px;width:2px;height:356px;background:#e6e6e6;"></div><div style="position:absolute;left:3085px;top:1980px;width:2px;height:13px;background:#e6e6e6;"></div><div style="position:absolute;left:2269.7px;top:1695px;width:205.70000000000027px;height:283px;background:#8639c3;"></div><div style="position:absolute;left:2269.7px;top:1684px;width:205.70000000000027px;height:11px;background:#5bc0de;"></div><div style="position:absolute;left:2269.7px;top:1651px;width:205.70000000000027px;height:33px;background:#fd9a35;"></div><div style="position:absolute;left:2555.5px;top:1703px;width:206.0999999999999px;height:275px;background:#8639c3;"></div><div style="position:absolute;left:2555.5px;top:1689px;width:206.0999999999999px;height:14px;background:#5bc0de;"></div><div style="position:absolute;left:2555.5px;top:1643px;width:206.0999999999999px;height:46px;background:#fd9a35;"></div><div style="position:absolute;left:2842px;top:1975px;width:205.4000000000001px;height:3px;background:#8639c3;"></div><div style="position:absolute;left:2842px;top:1632.4px;width:205.4000000000001px;height:342.5999999999999px;background:#fd9a35;"></div><div style="position:absolute;left:1372px;width:2000px;text-align:center;top:2000.4px;font-size:22.5px;line-height:22.5px;color:#666666;white-space:nowrap;">'23-'24</div><div style="position:absolute;left:1658.3000000000002px;width:2000px;text-align:center;top:2000.4px;font-size:22.5px;line-height:22.5px;color:#666666;white-space:nowrap;">'24-'25</div><div style="position:absolute;left:1944px;width:2000px;text-align:center;top:2000.4px;font-size:22.5px;line-height:22.5px;color:#666666;white-space:nowrap;">'25-'26</div><div style="position:absolute;left:2241px;top:1581px;width:75px;height:22px;background:#8639c3;"></div><div style="position:absolute;left:2327px;top:1579.8px;font-size:22.5px;line-height:22.5px;color:#666666;white-space:nowrap;">Accepted AC</div><div style="position:absolute;left:2478px;top:1581px;width:75px;height:22px;background:#5bc0de;"></div><div style="position:absolute;left:2563px;top:1579.8px;font-size:22.5px;line-height:22.5px;color:#666666;white-space:nowrap;">In Process AC</div><div style="position:absolute;left:2727px;top:1581px;width:75px;height:22px;background:#fd9a35;"></div><div style="position:absolute;left:2812.5px;top:1579.8px;font-size:22.5px;line-height:22.5px;color:#666666;white-space:nowrap;">Not Submitted AC</div><div style="position:absolute;left:2147.5px;top:2041.6999999999998px;font-size:30px;line-height:30px;color:#212529;white-space:nowrap;">The chart excludes separated faculty who have not submitted Annual</div><div style="position:absolute;left:2147.5px;top:2095.3px;font-size:30px;line-height:30px;color:#212529;white-space:nowrap;">Certification</div><div style="position:absolute;left:34px;top:359px;width:563px;height:73px;background:rgb(255,247,127);mix-blend-mode:multiply;"></div><div style="position:absolute;left:1079px;top:368px;width:563px;height:73px;background:rgb(255,247,127);mix-blend-mode:multiply;"></div><div style="position:absolute;left:34px;top:1451px;width:707px;height:82.5px;background:rgb(255,247,127);mix-blend-mode:multiply;"></div><div style="position:absolute;left:1064px;top:1450px;width:369px;height:83.5px;background:rgb(255,247,127);mix-blend-mode:multiply;"></div><div style="position:absolute;left:2122px;top:1441px;width:591px;height:92.5px;background:rgb(255,247,127);mix-blend-mode:multiply;"></div><div style="position:absolute;left:0;top:0;width:3140px;height:2532px;border:1px solid #000;box-sizing:border-box;pointer-events:none;"></div>
</body></html>
